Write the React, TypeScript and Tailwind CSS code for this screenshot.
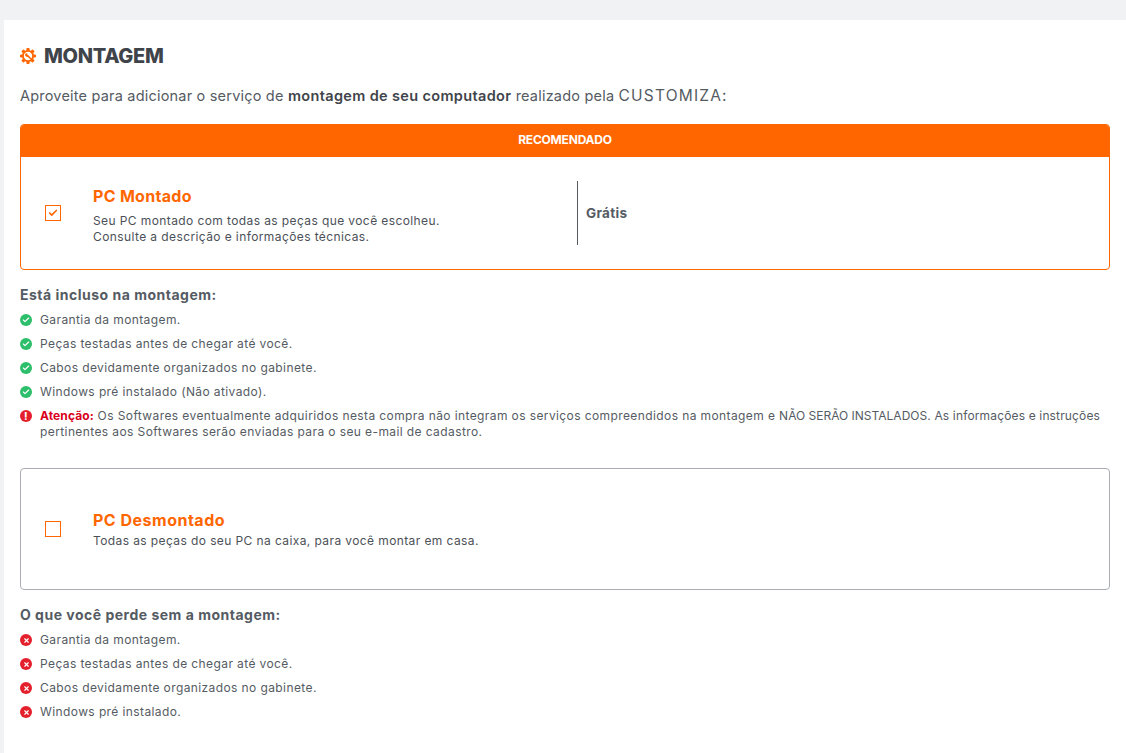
import { Check, X } from 'lucide-react';

const included = [
  'Garantia da montagem.',
  'Peças testadas antes de chegar até você.',
  'Cabos devidamente organizados no gabinete.',
  'Windows pré instalado (Não ativado).',
];

const lost = [
  'Garantia da montagem.',
  'Peças testadas antes de chegar até você.',
  'Cabos devidamente organizados no gabinete.',
  'Windows pré instalado.',
];

function GearIcon() {
  return (
    <svg width="16" height="16" viewBox="0 0 16 16" className="shrink-0">
      <g fill="#ff6600">
        <rect x="6.4" y="0" width="3.2" height="16" rx="0.8" />
        <rect x="6.4" y="0" width="3.2" height="16" rx="0.8" transform="rotate(45 8 8)" />
        <rect x="6.4" y="0" width="3.2" height="16" rx="0.8" transform="rotate(90 8 8)" />
        <rect x="6.4" y="0" width="3.2" height="16" rx="0.8" transform="rotate(135 8 8)" />
        <circle cx="8" cy="8" r="6" />
      </g>
      <circle cx="8" cy="8" r="4.2" fill="#fff" />
      <path d="M7.6 7.6 L10.8 10.8" stroke="#ff6600" strokeWidth="1.5" strokeLinecap="round" />
      <path d="M5 6.4 A2.4 2.4 0 0 0 8.6 8.6 L7.4 7.4 L7.4 5.2 A2.4 2.4 0 0 0 5 6.4 Z" fill="#ff6600" />
    </svg>
  );
}

function ListRow({ text, ok }: { text: string; ok: boolean }) {
  return (
    <li className="flex h-6 items-center gap-[8px]">
      <span
        className={`flex h-3 w-3 shrink-0 items-center justify-center rounded-full ${
          ok ? 'bg-[#2dbe6c]' : 'bg-[#e3202c]'
        }`}
      >
        {ok ? (
          <Check size={8} strokeWidth={3.5} className="text-white" />
        ) : (
          <X size={7} strokeWidth={4} className="text-white" />
        )}
      </span>
      <span>{text}</span>
    </li>
  );
}

export default function App() {
  return (
    <div className="min-h-[753px] bg-[#f1f2f4] pt-5 pl-1 font-['Inter','Liberation_Sans',sans-serif] text-[#555b63]">
      <div className="h-[733px] bg-white pt-[25px] pr-4 pl-4">
        <h2 className="flex h-[22px] items-center gap-2 text-[20px] leading-[22px] font-extrabold tracking-[-0.3px] text-[#3f444b]">
          <GearIcon />
          MONTAGEM
        </h2>

        <p className="mt-[18px] h-[22px] text-[14.5px] leading-[22px] tracking-[0.2px]">
          Aproveite para adicionar o serviço de{' '}
          <strong className="font-semibold tracking-[0.35px] text-[#3f444b]">montagem de seu computador</strong>{' '}
          realizado pela <span className="text-[15.5px] tracking-[1.2px]">CUSTOMIZA:</span>
        </p>

        <div className="mt-[17px] overflow-hidden rounded border border-[#ff6600]">
          <div className="flex h-[32px] items-center justify-center bg-[#ff6600] pb-[2px] text-[12px] font-bold tracking-[-0.2px] text-white">
            RECOMENDADO
          </div>
          <div className="flex h-[112px] items-center">
            <span className="ml-6 flex h-4 w-4 shrink-0 items-center justify-center border border-[#ff6600]">
              <Check size={10} strokeWidth={4} className="text-[#ff6600]" />
            </span>
            <div className="ml-[32px] w-[484px] pt-[2px]">
              <div className="text-[16px] leading-6 font-bold tracking-[0.3px] text-[#ff6600]">PC Montado</div>
              <div className="mt-[5px] text-[12px] leading-4 tracking-[0.4px] text-[#4c5158]">
                Seu PC montado com todas as peças que você escolheu.
                <br />
                Consulte a descrição e informações técnicas.
              </div>
            </div>
            <div className="flex h-16 items-center border-l border-[#555b63] pl-2 text-[13.5px] font-bold tracking-[0.3px]">
              Grátis
            </div>
          </div>
        </div>

        <h3 className="mt-[14px] text-[14px] leading-[22px] font-bold tracking-[0.5px]">Está incluso na montagem:</h3>
        <ul className="mt-[2px] text-[12px] leading-4 tracking-[0.4px]">
          {included.map((t) => (
            <ListRow key={t} text={t} ok />
          ))}
          <li className="flex items-start gap-[8px] pt-1">
            <span className="mt-[2px] flex h-3 w-3 shrink-0 items-center justify-center rounded-full bg-[#e3202c] text-[10px] leading-none font-extrabold text-white">
              !
            </span>
            <span>
              <strong className="font-bold tracking-[0.1px] text-[#d9001b]">Atenção:</strong> Os Softwares eventualmente
              adquiridos nesta compra não integram os serviços compreendidos na montagem e{' '}
              <span className="tracking-normal">NÃO SERÃO INSTALADOS.</span>{' '}
              <span className="tracking-[0.15px]">As informações e instruções</span> pertinentes aos Softwares serão
              enviadas para o seu e-mail de cadastro.
            </span>
          </li>
        </ul>

        <div className="mt-[28px] flex h-[122px] items-center rounded border border-[#a9adb3]">
          <span className="ml-6 h-4 w-4 shrink-0 border border-[#ff6600]" />
          <div className="ml-[32px] pb-[2px]">
            <div className="text-[16px] leading-6 font-bold tracking-[0.5px] text-[#ff6600]">PC Desmontado</div>
            <div className="mt-[1px] text-[12px] leading-4 tracking-[0.4px] text-[#4c5158]">
              Todas as peças do seu PC na caixa, para você montar em casa.
            </div>
          </div>
        </div>

        <h3 className="mt-[14px] text-[14px] leading-[22px] font-bold tracking-[0.5px]">
          O que você perde sem a montagem:
        </h3>
        <ul className="mt-[2px] text-[12px] leading-4 tracking-[0.4px]">
          {lost.map((t) => (
            <ListRow key={t} text={t} ok={false} />
          ))}
        </ul>
      </div>
    </div>
  );
}
